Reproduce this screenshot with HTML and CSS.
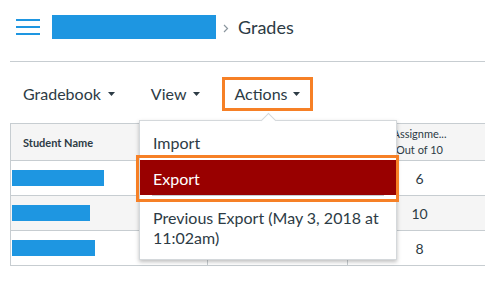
FILE: index.html
```html
<!DOCTYPE html>
<html lang="en">
<head>
    <meta charset="UTF-8">
    <title>Grades</title>
    <link rel="stylesheet" href="styles.css">
</head>
<body>
    <div class="page">
        <header class="topbar">
            <svg class="burger" width="24" height="16" viewBox="0 0 24 16">
                <rect x="0" y="0" width="24" height="2" fill="#1e96e1"/>
                <rect x="0" y="7" width="24" height="2" fill="#1e96e1"/>
                <rect x="0" y="14" width="24" height="2" fill="#1e96e1"/>
            </svg>
            <span class="course"></span>
            <svg class="chevron" width="6" height="9" viewBox="0 0 6 9">
                <path d="M1 1 L4.5 4.5 L1 8" fill="none" stroke="#8b969e" stroke-width="1.2"/>
            </svg>
            <span class="crumb">Grades</span>
        </header>

        <nav class="toolbar">
            <button class="tool">Gradebook <svg class="caret" width="7" height="4" viewBox="0 0 7 4"><path d="M0 0 H7 L3.5 4 Z" fill="#2d3b45"/></svg></button>
            <button class="tool">View <svg class="caret" width="7" height="4" viewBox="0 0 7 4"><path d="M0 0 H7 L3.5 4 Z" fill="#2d3b45"/></svg></button>
            <button class="tool active">Actions <svg class="caret" width="7" height="4" viewBox="0 0 7 4"><path d="M0 0 H7 L3.5 4 Z" fill="#2d3b45"/></svg></button>
        </nav>

        <div class="grid-wrap">
            <table class="grid">
                <thead>
                    <tr>
                        <th class="name-col">Student Name</th>
                        <th class="mid-col"></th>
                        <th class="score-col">Assignme...<br>Out of 10</th>
                    </tr>
                </thead>
                <tbody>
                    <tr>
                        <td><span class="student" style="width:92px"></span></td>
                        <td></td>
                        <td class="score">6</td>
                    </tr>
                    <tr class="alt">
                        <td><span class="student" style="width:78px"></span></td>
                        <td></td>
                        <td class="score">10</td>
                    </tr>
                    <tr>
                        <td><span class="student" style="width:83px"></span></td>
                        <td></td>
                        <td class="score">8</td>
                    </tr>
                </tbody>
            </table>

            <div class="menu">
                <div class="menu-item">Import</div>
                <div class="menu-item selected">Export</div>
                <div class="menu-sep"></div>
                <div class="menu-item multi">Previous Export (May 3, 2018 at 11:02am)</div>
                <div class="callout"></div>
            </div>
        </div>
    </div>
</body>
</html>
```

FILE: styles.css
```css
html, body {
    margin: 0;
    padding: 0;
    overflow: hidden;
}
body {
    font-family: 'Lato', 'Liberation Sans', sans-serif;
    color: #2d3b45;
    background: #fff;
    width: 485px;
    height: 284px;
}
.page {
    padding-left: 10px;
}
.topbar {
    display: flex;
    align-items: center;
    height: 54px;
    padding-bottom: 7px;
    border-bottom: 1px solid #c7cdd1;
}
.burger {
    margin-left: 6px;
}
.course {
    display: block;
    width: 164px;
    height: 24px;
    background: #1e96e1;
    margin-left: 12px;
}
.chevron {
    margin-left: 7px;
    margin-top: 2px;
}
.crumb {
    margin-left: 9px;
    font-size: 18px;
    margin-top: -1px;
}
.toolbar {
    display: flex;
    align-items: center;
    gap: 11px;
    margin-top: 15px;
}
.tool {
    display: flex;
    align-items: center;
    gap: 7px;
    font-family: inherit;
    font-size: 16px;
    color: #2d3b45;
    background: none;
    border: 3px solid transparent;
    padding: 5px 9px 6px 10px;
    height: 34px;
    cursor: pointer;
}
.tool.active {
    border-color: #f68026;
    gap: 5px;
    padding-left: 9px;
    padding-right: 10px;
    margin-left: -1px;
}
.caret {
    margin-top: 1px;
}
.grid-wrap {
    position: relative;
    margin-top: 12px;
}
.grid {
    border-collapse: collapse;
    width: 482px;
    table-layout: fixed;
}
.grid th, .grid td {
    border: 1px solid #c7cdd1;
    padding: 0;
}
.grid th {
    background: #f5f5f5;
    height: 36px;
    font-size: 11px;
    font-weight: bold;
    text-align: left;
}
.grid th.name-col {
    width: 184px;
    padding-left: 12px;
}
.mid-col {
    width: 139px;
}
.grid th.score-col {
    font-weight: normal;
    font-size: 11px;
    line-height: 16px;
    text-align: center;
}
.grid td {
    height: 34px;
}
.grid tr.alt td {
    background: #f5f5f5;
}
.student {
    display: block;
    height: 16px;
    background: #1e96e1;
    margin-left: 1px;
}
.score {
    text-align: center;
    font-size: 14px;
}
.menu {
    position: absolute;
    left: 129px;
    top: -3px;
    width: 256px;
    padding: 3px 0 4px 0;
    background: #fff;
    border: 1px solid #d4d8db;
    box-shadow: 0 2px 4px rgba(0, 0, 0, 0.25);
}
.menu::before {
    content: "";
    position: absolute;
    left: 123px;
    top: -6px;
    width: 10px;
    height: 10px;
    background: #fff;
    border-left: 1px solid #d4d8db;
    border-top: 1px solid #d4d8db;
    transform: rotate(45deg);
}
.menu-item {
    font-size: 16px;
    padding: 0 13px;
    height: 36px;
    line-height: 38px;
}
.menu-item.selected {
    background: #990000;
    color: #fff;
    height: 35px;
    line-height: 37px;
}
.menu-sep {
    height: 1px;
    margin: 0 12px;
    background: #c7cdd1;
}
.menu-item.multi {
    height: auto;
    line-height: 20px;
    padding-top: 12px;
    padding-bottom: 7px;
}
.callout {
    position: absolute;
    left: -4px;
    top: 34px;
    width: 257px;
    height: 41px;
    border: 3px solid #f68026;
}
```
